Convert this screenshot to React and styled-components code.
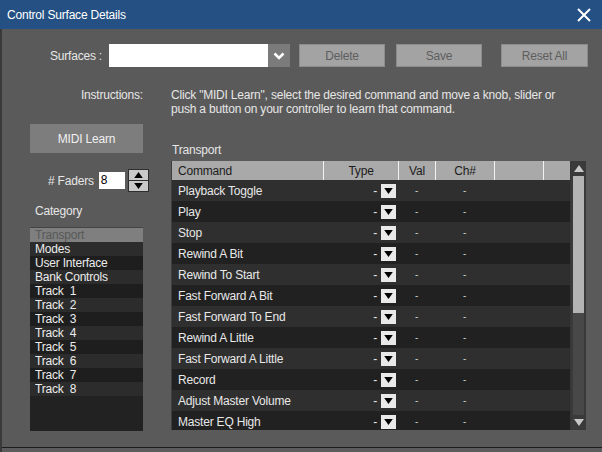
import styled, { createGlobalStyle } from "styled-components";

const GlobalStyle = createGlobalStyle`
  html, body {
    margin: 0;
    padding: 0;
    background: #3a3a3a;
    overflow: hidden;
  }
  body {
    font-family: "Liberation Sans", Arial, sans-serif;
    font-size: 12px;
    letter-spacing: -0.2px;
  }
`;

const Window = styled.div`
  width: 602px;
  height: 452px;
  display: flex;
  flex-direction: column;
  background: #5a5a5a;
`;

const TitleBar = styled.div`
  height: 29px;
  flex: 0 0 29px;
  background: #245083;
  display: flex;
  align-items: center;
  justify-content: space-between;
  padding: 0 11px 0 7px;
  box-sizing: border-box;
  color: #fff;
  font-size: 12px;
`;

const CloseIcon = styled.svg`
  width: 14px;
  height: 14px;
  display: block;
`;

const Body = styled.div`
  flex: 1;
  border-left: 2px solid #3a3a3a;
  display: flex;
  flex-direction: column;
  color: #e6e6e6;
`;

const SurfaceRow = styled.div`
  display: flex;
  align-items: center;
  height: 23px;
  margin-top: 15px;
`;

const FieldLabel = styled.span`
  width: ${p => p.$w}px;
  text-align: right;
  padding-right: ${p => p.$pad || 0}px;
  box-sizing: border-box;
  flex: 0 0 auto;
  color: #e6e6e6;
`;

const Combo = styled.div`
  display: flex;
  height: 23px;
  margin-left: 6px;
`;

const ComboField = styled.div`
  width: 159px;
  background: #fff;
`;

const ComboButton = styled.div`
  width: 22px;
  background: #7b7b7b;
  display: flex;
  align-items: center;
  justify-content: center;
`;

const FlatButton = styled.div`
  width: ${p => p.$w}px;
  height: 23px;
  margin-left: ${p => p.$ml}px;
  box-sizing: border-box;
  background: #a3a3a3;
  border: 1px solid #8c8c8c;
  color: #5e5e5e;
  display: flex;
  align-items: center;
  justify-content: center;
`;

const InstructionRow = styled.div`
  display: flex;
  margin-top: 21px;
  line-height: 14px;
`;

const InstructionText = styled.div`
  margin-left: 28px;
  width: 420px;
  color: #e6e6e6;
`;

const Main = styled.div`
  display: flex;
  padding-left: 28px;
  margin-top: 8px;
`;

const LeftColumn = styled.div`
  width: 113px;
  flex: 0 0 113px;
  display: flex;
  flex-direction: column;
`;

const LearnButton = styled.div`
  height: 29px;
  background: #7d7d7d;
  color: #f0f0f0;
  display: flex;
  align-items: center;
  justify-content: center;
`;

const FadersRow = styled.div`
  display: flex;
  align-items: center;
  margin-top: 16px;
  padding-left: 18px;
  height: 23px;
  white-space: nowrap;
`;

const FadersInput = styled.div`
  width: 26px;
  height: 17px;
  flex: 0 0 26px;
  background: #fff;
  color: #000;
  margin-left: 5px;
  padding-left: 2px;
  box-sizing: border-box;
  line-height: 17px;
`;

const Spinner = styled.div`
  margin-left: 3px;
  width: 21px;
  height: 23px;
  flex: 0 0 21px;
  display: flex;
  flex-direction: column;
  border: 1px solid #2e2e2e;
  box-sizing: border-box;
  background: #2e2e2e;
  gap: 1px;
`;

const SpinHalf = styled.div`
  flex: 1;
  background: #c9c9c9;
  display: flex;
  align-items: center;
  justify-content: center;
`;

const CategoryLabel = styled.div`
  margin-top: 11px;
  padding-left: 5px;
  height: 16px;
  line-height: 16px;
`;

const CategoryList = styled.div`
  margin-top: 8px;
  height: 204px;
  background: #222;
  border-top: 1px solid #444;
  box-sizing: border-box;
`;

const CategoryItem = styled.div`
  height: 14px;
  line-height: 14px;
  padding-left: 5px;
  white-space: pre;
  background: ${p => (p.$selected ? "#7f7f7f" : p.$odd ? "#1e1e1e" : "#2c2c2c")};
  color: ${p => (p.$selected ? "#585858" : "#ececec")};
`;

const RightColumn = styled.div`
  margin-left: 28px;
  display: flex;
  flex-direction: column;
  padding-top: 16px;
`;

const SectionLabel = styled.div`
  padding-left: 1px;
  height: 21px;
  line-height: 20px;
`;

const TableFrame = styled.div`
  display: flex;
  height: 269px;
  width: 415px;
  background: #363636;
  border-left: 1px solid #3f3f3f;
  box-sizing: border-box;
`;

const TableView = styled.div`
  width: 399px;
  overflow: hidden;
`;

const columns = "151px 75px 37px 59px 49px 28px";

const HeaderRow = styled.div`
  display: grid;
  grid-template-columns: ${columns};
  height: 19px;
  background: #a9a9a9;
  color: #1c1c1c;
`;

const HeaderCell = styled.div`
  display: flex;
  align-items: center;
  justify-content: ${p => (p.$left ? "flex-start" : "center")};
  padding-left: ${p => (p.$left ? "6px" : "0")};
  border-left: ${p => (p.$first ? "none" : "1px solid #f2f2f2")};
`;

const Row = styled.div`
  display: grid;
  grid-template-columns: ${columns};
  height: 21px;
  background: ${p => (p.$odd ? "#212121" : "#2f2f2f")};
  color: #e8e8e8;
`;

const Cell = styled.div`
  display: flex;
  align-items: center;
  justify-content: ${p => p.$justify || "center"};
  padding-left: ${p => p.$pl || 0}px;
  padding-right: ${p => p.$pr || 0}px;
  font-size: ${p => p.$fs || 12}px;
  color: ${p => p.$color || "inherit"};
`;

const DropBox = styled.div`
  width: 15px;
  height: 14px;
  margin-left: 4px;
  background: #e9e9e9;
  display: flex;
  align-items: center;
  justify-content: center;
`;

const ScrollBar = styled.div`
  width: 15px;
  margin-left: 1px;
  display: flex;
  flex-direction: column;
  background: #3a3a3a;
`;

const ScrollArrow = styled.div`
  height: 15px;
  flex: 0 0 15px;
  display: flex;
  align-items: center;
  justify-content: center;
`;

const ScrollTrack = styled.div`
  flex: 1;
  background: #484848;
  margin: 0 2px;
  display: flex;
  flex-direction: column;
`;

const ScrollThumb = styled.div`
  height: 137px;
  background: #b4b4b4;
`;

const Spacer = styled.div`
  flex: 1;
`;

const BottomStrip = styled.div`
  height: 4px;
  flex: 0 0 4px;
  border-top: 1px solid #1c1c1c;
  background: #5c5c5c;
`;

const Tri = ({ up, color = "#000", w = 9, h = 6 }) => (
  <svg width={w} height={h} viewBox="0 0 10 7" style={{ display: "block" }}>
    <polygon points={up ? "0,7 10,7 5,0" : "0,0 10,0 5,7"} fill={color} />
  </svg>
);

const categories = [
  "Transport",
  "Modes",
  "User Interface",
  "Bank Controls",
  "Track  1",
  "Track  2",
  "Track  3",
  "Track  4",
  "Track  5",
  "Track  6",
  "Track  7",
  "Track  8",
];

const commands = [
  "Playback Toggle",
  "Play",
  "Stop",
  "Rewind A Bit",
  "Rewind To Start",
  "Fast Forward A Bit",
  "Fast Forward To End",
  "Rewind A Little",
  "Fast Forward A Little",
  "Record",
  "Adjust Master Volume",
  "Master EQ High",
];

const App = () => {
  return (
    <Window>
      <GlobalStyle />
      <TitleBar>
        <span>Control Surface Details</span>
        <CloseIcon viewBox="0 0 14 14">
          <path d="M1 1 L13 13 M13 1 L1 13" stroke="#fff" strokeWidth="2" />
        </CloseIcon>
      </TitleBar>
      <Body>
        <SurfaceRow>
          <FieldLabel $w={101} $pad={1}>Surfaces :</FieldLabel>
          <Combo>
            <ComboField />
            <ComboButton>
              <svg width="12" height="8" viewBox="0 0 12 8">
                <path d="M1.5 1.5 L6 6 L10.5 1.5" stroke="#fff" strokeWidth="2.6" fill="none" />
              </svg>
            </ComboButton>
          </Combo>
          <FlatButton $w={86} $ml={9}>Delete</FlatButton>
          <FlatButton $w={86} $ml={11}>Save</FlatButton>
          <FlatButton $w={87} $ml={19}>Reset All</FlatButton>
        </SurfaceRow>

        <InstructionRow>
          <FieldLabel $w={141}>Instructions:</FieldLabel>
          <InstructionText>
            Click "MIDI Learn", select the desired command and move a knob, slider or
            <br />
            push a button on your controller to learn that command.
          </InstructionText>
        </InstructionRow>

        <Main>
          <LeftColumn>
            <LearnButton>MIDI Learn</LearnButton>
            <FadersRow>
              <span># Faders</span>
              <FadersInput>8</FadersInput>
              <Spinner>
                <SpinHalf><Tri up /></SpinHalf>
                <SpinHalf><Tri /></SpinHalf>
              </Spinner>
            </FadersRow>
            <CategoryLabel>Category</CategoryLabel>
            <CategoryList>
              {categories.map((c, i) => (
                <CategoryItem key={c} $selected={i === 0} $odd={i % 2 === 0}>
                  {c}
                </CategoryItem>
              ))}
            </CategoryList>
          </LeftColumn>

          <RightColumn>
            <SectionLabel>Transport</SectionLabel>
            <TableFrame>
              <TableView>
                <HeaderRow>
                  <HeaderCell $left $first>Command</HeaderCell>
                  <HeaderCell>Type</HeaderCell>
                  <HeaderCell>Val</HeaderCell>
                  <HeaderCell>Ch#</HeaderCell>
                  <HeaderCell />
                  <HeaderCell />
                </HeaderRow>
                {commands.map((c, i) => (
                  <Row key={c} $odd={i % 2 === 1}>
                    <Cell $justify="flex-start" $pl={6}>{c}</Cell>
                    <Cell $justify="flex-end" $pr={2}>
                      <span>-</span>
                      <DropBox><Tri /></DropBox>
                    </Cell>
                    <Cell $fs={10} $color="#cfcfcf">-</Cell>
                    <Cell $fs={10} $color="#cfcfcf">-</Cell>
                    <Cell />
                    <Cell />
                  </Row>
                ))}
              </TableView>
              <ScrollBar>
                <ScrollArrow><Tri up color="#c8c8c8" w={10} h={7} /></ScrollArrow>
                <ScrollTrack>
                  <ScrollThumb />
                </ScrollTrack>
                <ScrollArrow><Tri color="#c8c8c8" w={10} h={7} /></ScrollArrow>
              </ScrollBar>
            </TableFrame>
          </RightColumn>
        </Main>
        <Spacer />
        <BottomStrip />
      </Body>
    </Window>
  );
};

export default App;
